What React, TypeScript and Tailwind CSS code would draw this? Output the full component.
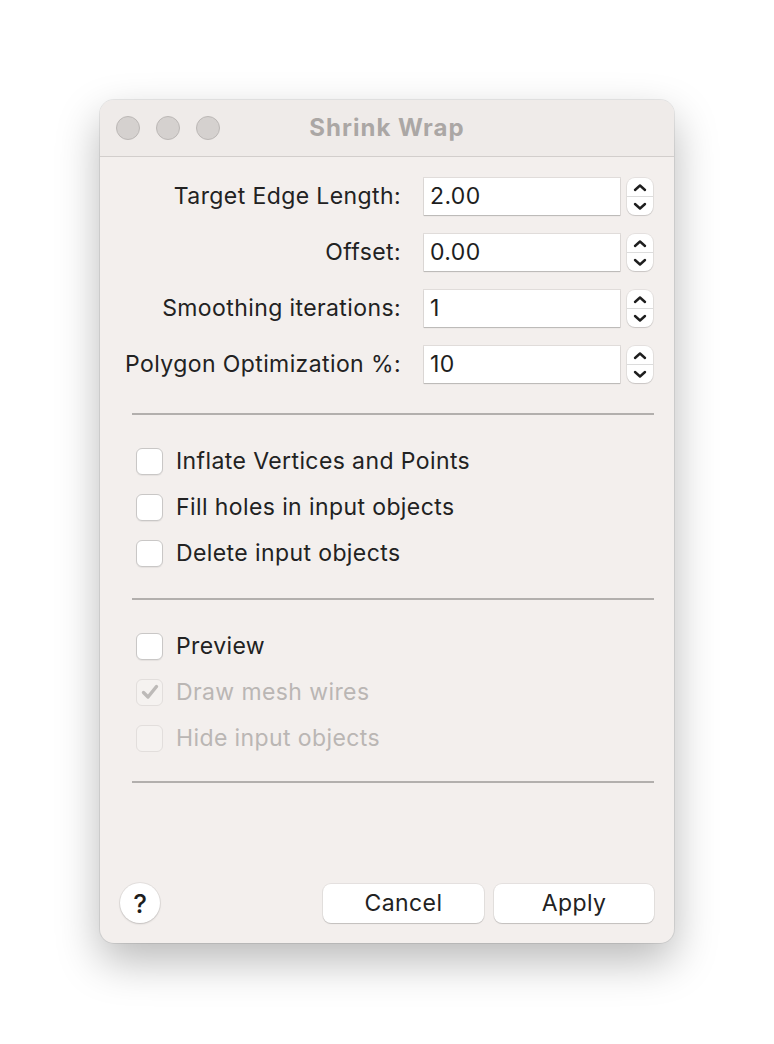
import React from "react";

const font = { fontFamily: "Inter, 'Liberation Sans', sans-serif" };

function Stepper() {
  return (
    <div className="ml-[7px] flex h-[37px] w-[26px] flex-col rounded-[8px] bg-white shadow-[0_0_0_1px_rgba(0,0,0,0.06),0_1px_1px_rgba(0,0,0,0.12)]">
      <div className="flex flex-1 items-center justify-center border-b border-[#dcdcdc]">
        <svg width="14" height="9" viewBox="0 0 14 9">
          <path d="M2 7 L7 2.5 L12 7" fill="none" stroke="#1e1e1e" strokeWidth="2.4" strokeLinecap="round" strokeLinejoin="round" />
        </svg>
      </div>
      <div className="flex flex-1 items-center justify-center">
        <svg width="14" height="9" viewBox="0 0 14 9">
          <path d="M2 2 L7 6.5 L12 2" fill="none" stroke="#1e1e1e" strokeWidth="2.4" strokeLinecap="round" strokeLinejoin="round" />
        </svg>
      </div>
    </div>
  );
}

function FieldRow({ label, value }: { label: string; value: string }) {
  return (
    <div className="flex h-[37px] items-center">
      <div className="w-[301px] whitespace-nowrap text-right text-[23px] tracking-[0.4px] text-[#222]">{label}</div>
      <div className="ml-[23px] flex h-[37px] w-[196px] items-center bg-white pl-[6px] text-[23px] tracking-[0.4px] text-[#1e1e1e] shadow-[0_0_0_1px_rgba(0,0,0,0.08),0_1px_1px_rgba(0,0,0,0.15)]">
        {value}
      </div>
      <Stepper />
    </div>
  );
}

function Check({ label, disabled, checked }: { label: string; disabled?: boolean; checked?: boolean }) {
  return (
    <div className="flex h-[26px] items-center pl-[36px]">
      <div
        className={
          disabled
            ? "flex h-[27px] w-[27px] items-center justify-center rounded-[6px] border border-[#e2dedc] bg-[#f5f2f0]"
            : "flex h-[27px] w-[27px] items-center justify-center rounded-[6px] border border-[#c9c7c6] bg-white shadow-[0_1px_1px_rgba(0,0,0,0.06)]"
        }
      >
        {checked && (
          <svg width="20" height="18" viewBox="0 0 20 18">
            <path d="M3.5 9.5 L8 14 L16.5 3.5" fill="none" stroke="#bdbab8" strokeWidth="3.4" strokeLinecap="round" strokeLinejoin="round" />
          </svg>
        )}
      </div>
      <span
        className={
          disabled
            ? "ml-[13px] whitespace-nowrap text-[23px] tracking-[0.4px] text-[#bab6b4]"
            : "ml-[13px] whitespace-nowrap text-[23px] tracking-[0.4px] text-[#222]"
        }
      >
        {label}
      </span>
    </div>
  );
}

function Sep() {
  return <div className="ml-[32px] mr-[20px] h-[2px] bg-[#b2afad]" />;
}

export default function App() {
  return (
    <div className="min-h-[1044px] w-[774px] bg-white pl-[100px] pt-[100px]" style={font}>
      <div className="flex h-[843px] w-[574px] flex-col overflow-hidden rounded-[14px] bg-[#f3efed] shadow-[0_0_0_1px_rgba(0,0,0,0.08),0_18px_44px_rgba(0,0,0,0.28)]">
        <div className="relative flex h-[57px] items-center border-b border-[#d2cecc] bg-[#efebe9]">
          <div className="flex gap-[16px] pl-[16px]">
            <div className="h-[24px] w-[24px] rounded-full border border-[#bcb8b6] bg-[#d5d1cf]" />
            <div className="h-[24px] w-[24px] rounded-full border border-[#bcb8b6] bg-[#d5d1cf]" />
            <div className="h-[24px] w-[24px] rounded-full border border-[#bcb8b6] bg-[#d5d1cf]" />
          </div>
          <div className="absolute inset-0 flex items-center justify-center text-[24px] font-bold tracking-[1px] text-[#aba7a5]">
            Shrink Wrap
          </div>
        </div>
        <div className="flex flex-col gap-[19px] pt-[21px]">
          <FieldRow label="Target Edge Length:" value="2.00" />
          <FieldRow label="Offset:" value="0.00" />
          <FieldRow label="Smoothing iterations:" value="1" />
          <FieldRow label="Polygon Optimization %:" value="10" />
        </div>
        <div className="mt-[30px]">
          <Sep />
        </div>
        <div className="flex flex-col gap-[20px] pb-[32px] pt-[33px]">
          <Check label="Inflate Vertices and Points" />
          <Check label="Fill holes in input objects" />
          <Check label="Delete input objects" />
        </div>
        <Sep />
        <div className="flex flex-col gap-[20px] pb-[30px] pt-[33px]">
          <Check label="Preview" />
          <Check label="Draw mesh wires" disabled checked />
          <Check label="Hide input objects" disabled />
        </div>
        <Sep />
        <div className="mt-auto flex items-center pb-[20px] pl-[20px] pr-[20px]">
          <div className="flex h-[40px] w-[40px] items-center justify-center rounded-full bg-white text-[26px] font-medium text-[#1e1e1e] shadow-[0_0_0_1px_rgba(0,0,0,0.06),0_1px_2px_rgba(0,0,0,0.15)]">
            ?
          </div>
          <div className="ml-auto flex gap-[10px]">
            <div className="flex h-[39px] w-[161px] items-center justify-center rounded-[8px] bg-white text-[23px] tracking-[0.4px] text-[#222] shadow-[0_0_0_1px_rgba(0,0,0,0.06),0_1px_1px_rgba(0,0,0,0.15)]">
              Cancel
            </div>
            <div className="flex h-[39px] w-[160px] items-center justify-center rounded-[8px] bg-white text-[23px] tracking-[0.4px] text-[#222] shadow-[0_0_0_1px_rgba(0,0,0,0.06),0_1px_1px_rgba(0,0,0,0.15)]">
              Apply
            </div>
          </div>
        </div>
      </div>
    </div>
  );
}
